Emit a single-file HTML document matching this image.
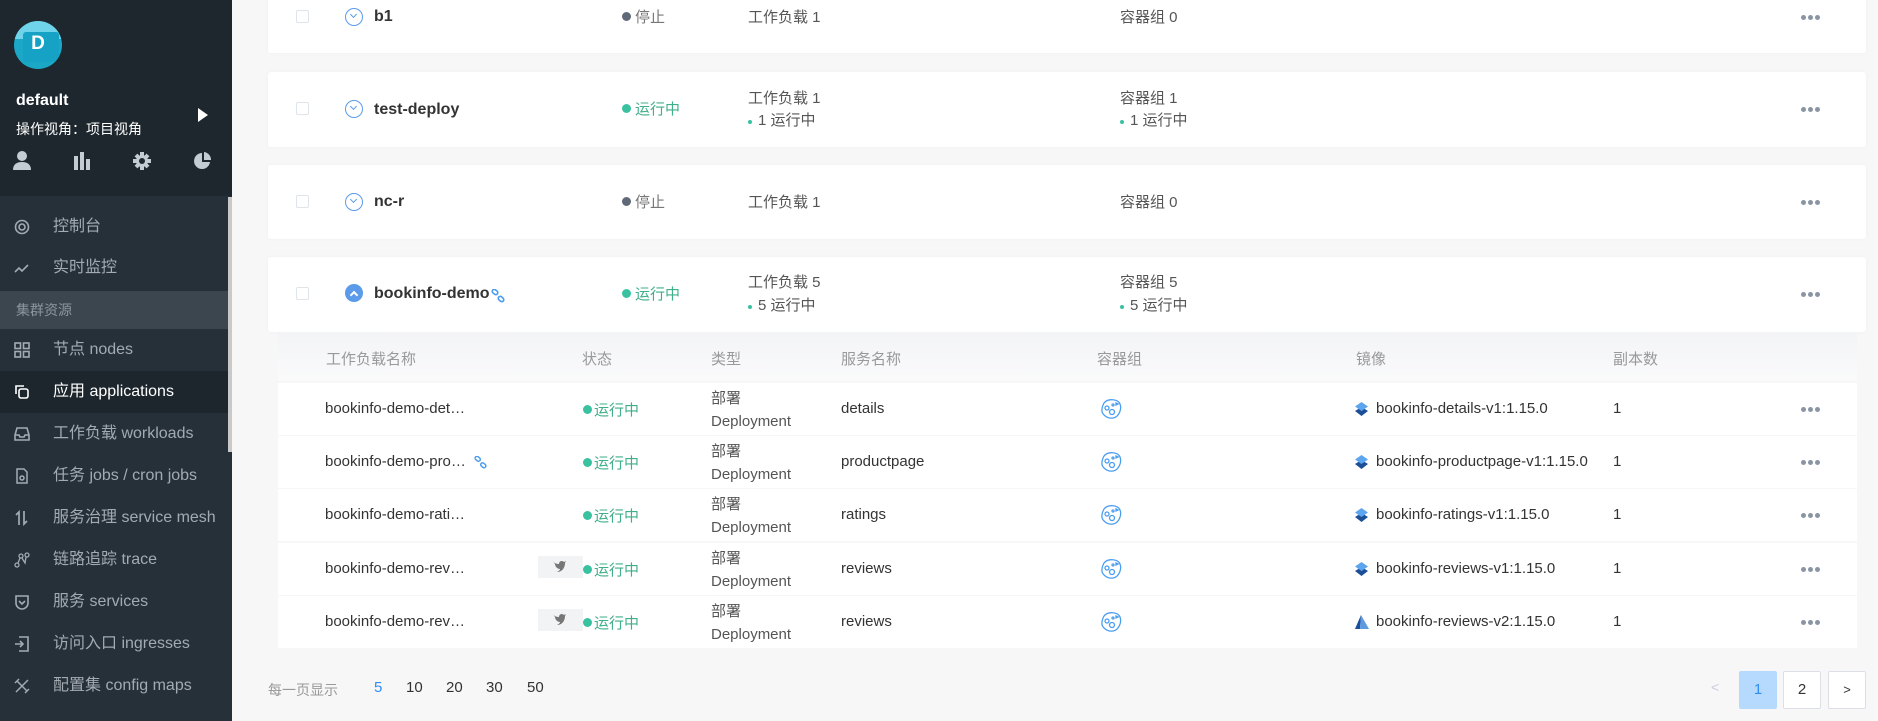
<!DOCTYPE html>
<html><head><meta charset="utf-8"><style>
*{margin:0;padding:0;box-sizing:border-box}
body{width:1878px;height:721px;overflow:hidden;background:#f7f7f8;font-family:"Liberation Sans","Noto Sans CJK SC",sans-serif;position:relative;color:#3d3d3d}
.a{position:absolute;white-space:nowrap}
#side{position:absolute;left:0;top:0;width:232px;height:721px;background:#263038}
#top{position:absolute;left:0;top:0;width:232px;height:196px;background:#1e272e}
.mi{position:absolute;left:0;width:228px;height:42px;line-height:42px;color:#a3aab2;font-size:16px}
.mi .ic{position:absolute;left:14px;top:13px;width:16px;height:16px}
.mi .t{position:absolute;left:53px}
.card{position:absolute;left:268px;width:1598px;background:#fff;border-radius:3px;box-shadow:0 0 4px rgba(0,0,0,.03)}
.cb{position:absolute;left:296px;width:13px;height:13px;border:1px solid #dfe3ea;border-radius:2px;background:#fff}
.ex{position:absolute;left:345px;width:18px;height:18px;border:1.5px solid #5b9bea;border-radius:50%}
.ex:after{content:"";position:absolute;left:5px;top:3px;width:4px;height:4px;border-right:1.5px solid #5b9bea;border-bottom:1.5px solid #5b9bea;transform:rotate(45deg)}
.nm{font-size:16px;color:#333;font-weight:bold;font-family:"Liberation Sans","Noto Sans CJK SC",sans-serif}
.t15{font-size:15px;color:#555}
.dot{display:inline-block;width:9px;height:9px;border-radius:50%;margin-right:4px;vertical-align:1px}
.g{color:#3fae8a}
.dots{position:absolute;left:1801px;width:20px;height:5px}
.dots i{position:absolute;top:0;width:5px;height:5px;border-radius:50%;background:#8a95a3}
.row{position:absolute;left:278px;width:1579px;height:52px;background:#fff}
.pg{position:absolute;top:671px;width:38px;height:38px;border:1px solid #dcdfe6;border-radius:2px;background:#fff;text-align:center;line-height:36px;font-size:15px;color:#333}
</style></head><body>
<div id="side">
<div id="top"></div>
<div class="a" style="left:14px;top:21px;width:48px;height:48px;border-radius:50%;background:#1ba8c7;overflow:hidden"><div style="position:absolute;left:0;top:0;width:48px;height:18px;background:#6fd3ea"></div><div style="position:absolute;left:9px;top:11px;width:36px;height:30px;background:#16a2c4;border-radius:3px"></div><div style="position:absolute;left:0;top:12px;width:48px;text-align:center;color:#fff;font-weight:bold;font-size:19px">D</div></div>
<div class="a" style="left:16px;top:92px;color:#fff;font-weight:bold;font-size:16px">default</div>
<div class="a" style="left:16px;top:119px;color:#fff;font-size:14px">操作视角：项目视角</div>
<div class="a" style="left:198px;top:108px;width:0;height:0;border-left:10px solid #fff;border-top:7px solid transparent;border-bottom:7px solid transparent"></div>
<svg class="a" style="left:12px;top:150px" width="200" height="22" viewBox="0 0 200 22" fill="#c4ccd3">
<circle cx="10" cy="6" r="5"/><path d="M1 20c0-6 4-8 9-8s9 2 9 8z"/>
<rect x="62" y="6" width="4" height="14"/><rect x="68" y="2" width="4" height="18"/><rect x="74" y="9" width="4" height="11"/>
<circle cx="130" cy="11" r="6"/><g stroke="#c4ccd3" stroke-width="4"><path d="M130 2v18M121 11h18M124 5l12 12M136 5l-12 12"/></g><circle cx="130" cy="11" r="3" fill="#1e272e"/>
<path d="M190 3a8 8 0 1 0 8 9h-8z"/><path d="M192 2a8 8 0 0 1 7 8h-7z"/>
</svg>
<div style="position:absolute;left:228px;top:197px;width:4px;height:255px;background:#c9c9c9"></div>
<div class="mi" style="top:206px"><svg class="ic" viewBox="0 0 16 16" fill="none" stroke="#a3aab2" stroke-width="1.6"><circle cx="8" cy="8" r="6.5"/><circle cx="8" cy="8" r="3"/></svg><span class="t">控制台</span></div>
<div class="mi" style="top:247px"><svg class="ic" viewBox="0 0 16 16" fill="none" stroke="#a3aab2" stroke-width="1.6"><path d="M1 12l4-4 3 3 6-6"/></svg><span class="t">实时监控</span></div>
<div class="mi" style="top:291px;height:38px;line-height:38px;background:#3b464f;font-size:14px;color:#8d959d"><span style="position:absolute;left:16px">集群资源</span></div>
<div class="mi" style="top:329px"><svg class="ic" viewBox="0 0 16 16" fill="none" stroke="#a3aab2" stroke-width="1.6"><rect x="1" y="1" width="5.5" height="5.5"/><rect x="9.5" y="1" width="5.5" height="5.5"/><rect x="1" y="9.5" width="5.5" height="5.5"/><rect x="9.5" y="9.5" width="5.5" height="5.5"/></svg><span class="t">节点 nodes</span></div>
<div class="mi" style="top:371px;background:#1d262d;color:#fff"><svg class="ic" viewBox="0 0 16 16" fill="none" stroke="#fff" stroke-width="1.6"><path d="M2 10V2h8"/><rect x="5" y="5" width="9" height="9" rx="2"/></svg><span class="t">应用 applications</span></div>
<div class="mi" style="top:413px"><svg class="ic" viewBox="0 0 16 16" fill="none" stroke="#a3aab2" stroke-width="1.6"><path d="M1 9l2-7h10l2 7v5H1zM1 9h4l1 2h4l1-2h4"/></svg><span class="t">工作负载 workloads</span></div>
<div class="mi" style="top:455px"><svg class="ic" viewBox="0 0 16 16" fill="none" stroke="#a3aab2" stroke-width="1.5"><path d="M3 1h7l3 3v11H3z"/><circle cx="8" cy="10" r="2"/></svg><span class="t">任务 jobs / cron jobs</span></div>
<div class="mi" style="top:497px"><svg class="ic" viewBox="0 0 16 16" fill="none" stroke="#a3aab2" stroke-width="1.7"><path d="M5 15V2L2 5M10 1v13l3-3"/></svg><span class="t">服务治理 service mesh</span></div>
<div class="mi" style="top:539px"><svg class="ic" viewBox="0 0 16 16" fill="none" stroke="#a3aab2" stroke-width="1.3"><circle cx="3" cy="13" r="2"/><circle cx="7" cy="4" r="2"/><circle cx="13" cy="3" r="2"/><path d="M4 11l2-5M8 6l3 5 1-6"/></svg><span class="t">链路追踪 trace</span></div>
<div class="mi" style="top:581px"><svg class="ic" viewBox="0 0 16 16" fill="none" stroke="#a3aab2" stroke-width="1.6"><path d="M2 2h12v7a6 6 0 0 1-12 0z"/><path d="M5 7l3 3 3-3"/></svg><span class="t">服务 services</span></div>
<div class="mi" style="top:623px"><svg class="ic" viewBox="0 0 16 16" fill="none" stroke="#a3aab2" stroke-width="1.6"><path d="M5 1h9v14H5M1 8h8M6 5l3 3-3 3"/></svg><span class="t">访问入口 ingresses</span></div>
<div class="mi" style="top:665px"><svg class="ic" viewBox="0 0 16 16" fill="none" stroke="#a3aab2" stroke-width="1.5"><path d="M2 14L14 2M3 3l10 10M1 5l4-4M11 15l4-4"/></svg><span class="t">配置集 config maps</span></div>
</div>

<div class="card" style="top:-10px;height:63px"></div>
<div class="card" style="top:72px;height:75px"></div>
<div class="card" style="top:165px;height:74px"></div>
<div class="card" style="top:257px;height:75px"></div>

<div class="cb" style="top:10px"></div><div class="ex" style="top:8px"></div>
<div class="a nm" style="left:374px;top:8px">b1</div>
<div class="a t15" style="left:622px;top:6px;color:#777"><span class="dot" style="background:#5f6977"></span>停止</div>
<div class="a t15" style="left:748px;top:6px">工作负载 1</div>
<div class="a t15" style="left:1120px;top:6px">容器组 0</div>
<div class="dots" style="top:15px"><i style="left:0"></i><i style="left:7px"></i><i style="left:14px"></i></div>

<div class="cb" style="top:102px"></div><div class="ex" style="top:100px"></div>
<div class="a nm" style="left:374px;top:101px">test-deploy</div>
<div class="a t15 g" style="left:622px;top:98px"><span class="dot" style="background:#3ac2a0"></span>运行中</div>
<div class="a t15" style="left:748px;top:87px">工作负载 1</div>
<div class="a t15" style="left:748px;top:109px"><span class="dot" style="background:#3ac2a0;width:4px;height:4px;margin-right:6px"></span>1 运行中</div>
<div class="a t15" style="left:1120px;top:87px">容器组 1</div>
<div class="a t15" style="left:1120px;top:109px"><span class="dot" style="background:#3ac2a0;width:4px;height:4px;margin-right:6px"></span>1 运行中</div>
<div class="dots" style="top:107px"><i style="left:0"></i><i style="left:7px"></i><i style="left:14px"></i></div>

<div class="cb" style="top:195px"></div><div class="ex" style="top:193px"></div>
<div class="a nm" style="left:374px;top:193px">nc-r</div>
<div class="a t15" style="left:622px;top:191px;color:#777"><span class="dot" style="background:#5f6977"></span>停止</div>
<div class="a t15" style="left:748px;top:191px">工作负载 1</div>
<div class="a t15" style="left:1120px;top:191px">容器组 0</div>
<div class="dots" style="top:200px"><i style="left:0"></i><i style="left:7px"></i><i style="left:14px"></i></div>

<div class="cb" style="top:287px"></div>
<div class="a" style="left:345px;top:284px;width:18px;height:18px;border-radius:50%;background:#5b9bea"></div>
<div class="a" style="left:351px;top:292px;width:6px;height:6px;border-left:2px solid #fff;border-top:2px solid #fff;transform:rotate(45deg)"></div>
<div class="a nm" style="left:374px;top:285px">bookinfo-demo</div>
<svg class="a" style="left:491px;top:289px" width="14" height="14" viewBox="0 0 14 14" fill="none" stroke="#4a9df0" stroke-width="1.6"><rect x="1" y="1" width="6" height="4" rx="2" transform="rotate(40 4 3)"/><rect x="7" y="8" width="6" height="4" rx="2" transform="rotate(40 10 10)"/></svg>
<div class="a t15 g" style="left:622px;top:283px"><span class="dot" style="background:#3ac2a0"></span>运行中</div>
<div class="a t15" style="left:748px;top:271px">工作负载 5</div>
<div class="a t15" style="left:748px;top:294px"><span class="dot" style="background:#3ac2a0;width:4px;height:4px;margin-right:6px"></span>5 运行中</div>
<div class="a t15" style="left:1120px;top:271px">容器组 5</div>
<div class="a t15" style="left:1120px;top:294px"><span class="dot" style="background:#3ac2a0;width:4px;height:4px;margin-right:6px"></span>5 运行中</div>
<div class="dots" style="top:292px"><i style="left:0"></i><i style="left:7px"></i><i style="left:14px"></i></div>

<div class="a" style="left:278px;top:332px;width:1579px;height:49px;background:linear-gradient(#f3f4f6,#fafafb)"></div>
<div class="a t15" style="left:326px;top:348px;color:#999">工作负载名称</div>
<div class="a t15" style="left:582px;top:348px;color:#999">状态</div>
<div class="a t15" style="left:711px;top:348px;color:#999">类型</div>
<div class="a t15" style="left:841px;top:348px;color:#999">服务名称</div>
<div class="a t15" style="left:1097px;top:348px;color:#999">容器组</div>
<div class="a t15" style="left:1356px;top:348px;color:#999">镜像</div>
<div class="a t15" style="left:1613px;top:348px;color:#999">副本数</div>

<div id="rows"></div>
<script>
var d=[["bookinfo-demo-det…","details","bookinfo-details-v1:1.15.0",0],["bookinfo-demo-pro…","productpage","bookinfo-productpage-v1:1.15.0",1],["bookinfo-demo-rati…","ratings","bookinfo-ratings-v1:1.15.0",0],["bookinfo-demo-rev…","reviews","bookinfo-reviews-v1:1.15.0",2],["bookinfo-demo-rev…","reviews","bookinfo-reviews-v2:1.15.0",3]];
var h="";
d.forEach(function(r,i){var y=383+i*53.2;var c=y+26;
h+='<div class="row" style="top:'+y+'px"></div>';
h+='<div class="a t15" style="left:325px;top:'+(c-9)+'px;color:#333">'+r[0]+'</div>';
if(r[3]==1)h+='<svg class="a" style="left:474px;top:'+(c-6)+'px" width="13" height="13" viewBox="0 0 14 14" fill="none" stroke="#4a9df0" stroke-width="1.6"><rect x="1" y="1" width="6" height="4" rx="2" transform="rotate(40 4 3)"/><rect x="7" y="8" width="6" height="4" rx="2" transform="rotate(40 10 10)"/></svg>';
if(r[3]>=2)h+='<div class="a" style="left:538px;top:'+(c-13)+'px;width:45px;height:22px;background:#f2f3f5"></div><svg class="a" style="left:551px;top:'+(c-10)+'px" width="16" height="14" viewBox="0 0 16 14" fill="#777"><path d="M1 1c2 3 4 4 7 4 0-3 3-4 5-2l2-1-1 2c0 5-3 9-8 9 2-1 3-2 3-3-3 0-5-3-5-5z"/></svg>';
h+='<div class="a t15 g" style="left:583px;top:'+(c-10)+'px"><span class="dot" style="background:#3ac2a0;margin-right:2px"></span>运行中</div>';
h+='<div class="a t15" style="left:711px;top:'+(c-22)+'px;line-height:23px">部署<br>Deployment</div>';
h+='<div class="a t15" style="left:841px;top:'+(c-9)+'px;color:#333">'+r[1]+'</div>';
h+='<svg class="a" style="left:1100px;top:'+(c-11)+'px" width="22" height="22" viewBox="0 0 22 22" fill="none" stroke="#4a9df0" stroke-width="1.3"><path d="M4 5c4-5 14-4 16 1s-1 13-7 14S1 16 2 11c0-2 1-4 2-6z"/><circle cx="7" cy="10" r="2"/><circle cx="12" cy="14" r="2.5"/><circle cx="13" cy="7" r="1"/><path d="M16 5l2 1-2 1z"/></svg>';
if(r[3]==3)h+='<svg class="a" style="left:1355px;top:'+(c-7)+'px" width="14" height="14" viewBox="0 0 14 14"><path d="M6 0L0 14h5z" fill="#1a4f9c"/><path d="M6 0l8 14H5z" fill="#5d9ae0"/></svg>';
else h+='<svg class="a" style="left:1355px;top:'+(c-7)+'px" width="13" height="15" viewBox="0 0 13 15"><path d="M6.5 5L13 9l-6.5 5L0 9z" fill="#1d4f96"/><path d="M6.5 0L13 4.5 6.5 9 0 4.5z" fill="#5ea5f0"/></svg>';
h+='<div class="a t15" style="left:1376px;top:'+(c-9)+'px;color:#333">'+r[2]+'</div>';
h+='<div class="a t15" style="left:1613px;top:'+(c-9)+'px;color:#333">1</div>';
h+='<div class="dots" style="top:'+(c-2)+'px"><i style="left:0"></i><i style="left:7px"></i><i style="left:14px"></i></div>';
});
document.getElementById("rows").innerHTML=h;
</script>

<div class="a" style="left:268px;top:680px;font-size:14px;color:#999">每一页显示</div>
<div class="a" style="left:374px;top:679px;font-size:15px;color:#2f8ef5">5</div>
<div class="a" style="left:406px;top:679px;font-size:15px;color:#333">10</div>
<div class="a" style="left:446px;top:679px;font-size:15px;color:#333">20</div>
<div class="a" style="left:486px;top:679px;font-size:15px;color:#333">30</div>
<div class="a" style="left:527px;top:679px;font-size:15px;color:#333">50</div>
<div class="a" style="left:1711px;top:679px;font-size:14px;color:#ccd">&lt;</div>
<div class="pg" style="left:1739px;background:#b6dafd;border-color:#b6dafd;color:#2f8ef5">1</div>
<div class="pg" style="left:1783px">2</div>
<div class="pg" style="left:1828px;font-size:13px">&gt;</div>
</body></html>
